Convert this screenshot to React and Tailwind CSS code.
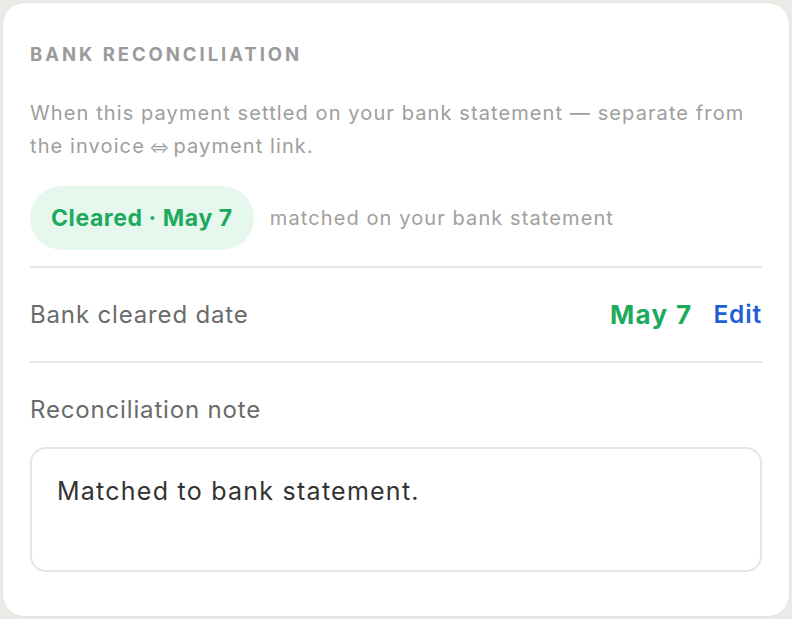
export default function App() {
  return (
    <div className="min-h-screen bg-[#ebeae6] p-[2px]" style={{ fontFamily: "Inter, 'Noto Sans', sans-serif" }}>
      <div className="h-[615px] w-[788px] rounded-[22px] border border-[#e2e1dc] bg-white px-[27px] pt-[38px]">
        <div className="text-[18.5px] font-bold uppercase tracking-[0.16em] text-[#9b9b9b] leading-[26px]">
          Bank Reconciliation
        </div>
        <p className="mt-[30px] text-[20px] leading-[33px] tracking-[0.055em] text-[#9e9e9e]">
          When this payment settled on your bank statement — separate from the invoice<span className="text-[15px] tracking-normal"> ⇔ </span>payment link.
        </p>
        <div className="mt-[22px] flex items-center gap-[16px]">
          <span className="flex h-[64px] items-center rounded-full bg-[#e6f7ee] px-[21px] text-[23px] font-bold tracking-[0.025em] text-[#1caa5e]">
            Cleared · May 7
          </span>
          <span className="text-[20px] tracking-[0.055em] text-[#a0a0a0]">matched on your bank statement</span>
        </div>
        <div className="mt-[16px] h-[2px] bg-[#e8e7e2]" />
        <div className="flex h-[93px] items-center justify-between">
          <span className="text-[24px] tracking-[0.035em] text-[#6b6b6b]">Bank cleared date</span>
          <div className="flex items-center gap-[21px]">
            <span className="text-[26px] font-bold tracking-[0.05em] text-[#1caa5e]">May 7</span>
            <span className="text-[24.5px] font-semibold tracking-[0.035em] text-[#1f5fd6]">Edit</span>
          </div>
        </div>
        <div className="h-[2px] bg-[#e8e7e2]" />
        <div className="mt-[31px] text-[24px] leading-[32px] tracking-[0.035em] text-[#6b6b6b]">Reconciliation note</div>
        <div className="mt-[21px] h-[125px] rounded-[16px] border-2 border-[#e6e5e0] px-[25px] pt-[24px] text-[25px] leading-[36px] tracking-[0.05em] text-[#333333]">
          Matched to bank statement.
        </div>
      </div>
    </div>
  );
}
